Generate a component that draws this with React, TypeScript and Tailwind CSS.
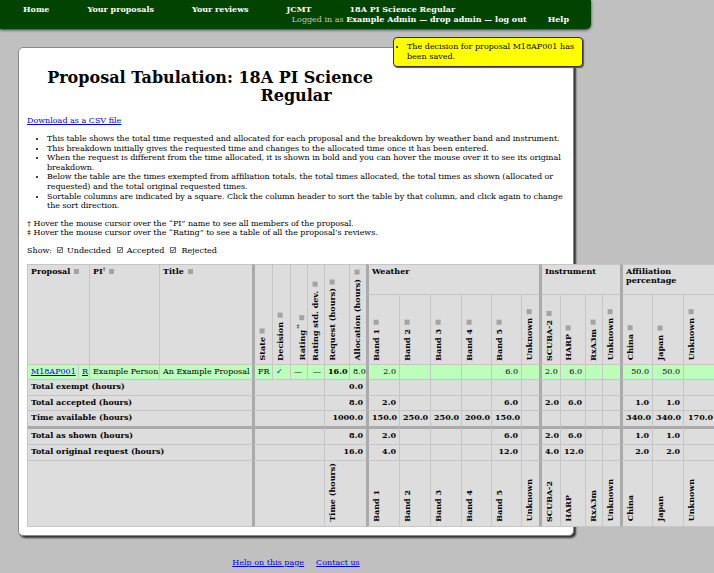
import React from "react";

/* sort indicator square */
function Sq() {
  return <span className="inline-block w-[5px] h-[5px] bg-[#a3a3a3] ms-[4px]" />;
}

function Rot({ children, sq }: { children: React.ReactNode; sq?: boolean }) {
  return (
    <div className="[writing-mode:vertical-rl] rotate-180 whitespace-nowrap font-bold">
      {children}
      {sq && <Sq />}
    </div>
  );
}

function Check() {
  return (
    <svg width="6" height="6" viewBox="0 0 6 6" className="inline-block align-[-0.5px]">
      <rect x="0.5" y="0.5" width="5" height="5" fill="#fff" stroke="#777" />
      <path d="M1.3 3.1 L2.5 4.3 L4.7 1.4" stroke="#222" strokeWidth="0.9" fill="none" />
    </svg>
  );
}

const C = "border-l border-t border-[#c6c6c6] px-[3px] py-0";
const TH = "border-l-[3px] border-l-[#aaaaaa]";
const TOP = "border-t-[3px] border-t-[#aaaaaa]";

const GROUP_START = [0, 6, 10];
const SUB_LABELS = ["Band 1", "Band 2", "Band 3", "Band 4", "Band 5", "Unknown", "SCUBA-2", "HARP", "RxA3m", "Unknown", "China", "Japan", "Unknown"];

const SUMMARY = [
  { label: "Total exempt (hours)", value: "0.0", cells: ["", "", "", "", "", "", "", "", "", "", "", "", ""] },
  { label: "Total accepted (hours)", value: "8.0", cells: ["2.0", "", "", "", "6.0", "", "2.0", "6.0", "", "", "1.0", "1.0", ""] },
  { label: "Time available (hours)", value: "1000.0", cells: ["150.0", "250.0", "250.0", "200.0", "150.0", "", "", "", "", "", "340.0", "340.0", "170.0"] },
  { label: "Total as shown (hours)", value: "8.0", cells: ["2.0", "", "", "", "6.0", "", "2.0", "6.0", "", "", "1.0", "1.0", ""], sep: true },
  { label: "Total original request (hours)", value: "16.0", cells: ["4.0", "", "", "", "12.0", "", "4.0", "12.0", "", "", "2.0", "2.0", ""] },
];
const ROW_H = ["h-[15.5px]", "h-[15.5px]", "h-[15.5px]", "h-[18.5px]", "h-[15.5px]"];

const DATA_CELLS = ["2.0", "", "", "", "6.0", "", "2.0", "6.0", "", "", "50.0", "50.0", ""];

function Tabulation() {
  return (
    <table className="border-separate border-spacing-0 table-fixed w-[689px] mt-[8px] bg-[#dddddd]">
      <colgroup>
        <col className="w-[51px]" />
        <col className="w-[11px]" />
        <col className="w-[70px]" />
        <col className="w-[93px]" />
        <col className="w-[20px]" />
        <col className="w-[18px]" />
        <col className="w-[17px]" />
        <col className="w-[17px]" />
        <col className="w-[25px]" />
        <col className="w-[17px]" />
        <col className="w-[33px]" />
        <col className="w-[31px]" />
        <col className="w-[31px]" />
        <col className="w-[30px]" />
        <col className="w-[30px]" />
        <col className="w-[18px]" />
        <col className="w-[21px]" />
        <col className="w-[25px]" />
        <col className="w-[17px]" />
        <col className="w-[18px]" />
        <col className="w-[32px]" />
        <col className="w-[31px]" />
        <col className="w-[33px]" />
      </colgroup>
      <thead>
        <tr className="h-[30px]">
          <th colSpan={2} rowSpan={2} className={`${C} align-top text-left pt-[2px]`}>
            Proposal<Sq />
          </th>
          <th rowSpan={2} className={`${C} align-top text-left pt-[2px]`}>
            PI<sup className="text-[5px] top-[-3px]">†</sup><Sq />
          </th>
          <th rowSpan={2} className={`${C} align-top text-left pt-[2px]`}>
            Title<Sq />
          </th>
          <th rowSpan={2} className={`${C} ${TH} align-bottom pb-[3px]`}><Rot sq>State</Rot></th>
          <th rowSpan={2} className={`${C} align-bottom pb-[3px]`}><Rot sq>Decision</Rot></th>
          <th rowSpan={2} className={`${C} align-bottom pb-[3px]`}>
            <Rot sq>Rating<span className="text-[5px] align-super">‡</span></Rot>
          </th>
          <th rowSpan={2} className={`${C} align-bottom pb-[3px]`}><Rot sq>Rating std. dev.</Rot></th>
          <th rowSpan={2} className={`${C} align-bottom pb-[3px]`}><Rot sq>Request (hours)</Rot></th>
          <th rowSpan={2} className={`${C} align-bottom pb-[3px]`}><Rot sq>Allocation (hours)</Rot></th>
          <th colSpan={6} className={`${C} ${TH} align-top text-left pt-[2px]`}>Weather</th>
          <th colSpan={4} className={`${C} ${TH} align-top text-left pt-[2px]`}>Instrument</th>
          <th colSpan={3} className={`${C} ${TH} align-top text-left pt-[2px]`}>Affiliation percentage</th>
        </tr>
        <tr className="h-[70px]">
          {SUB_LABELS.map((l, i) => (
            <th key={i} className={`${C} ${GROUP_START.includes(i) ? TH : ""} align-bottom pb-[3px]`}>
              <Rot sq>{l}</Rot>
            </th>
          ))}
        </tr>
      </thead>
      <tbody>
        <tr className="h-[15.5px] bg-[#bbffbb]">
          <td className={C}>
            <a className="text-[#0000ee] underline">M18AP001</a>
          </td>
          <td className={C}>
            <a className="text-[#0000ee] underline">R</a>
          </td>
          <td className={`${C} whitespace-nowrap`}>Example Person</td>
          <td className={`${C} whitespace-nowrap`}>An Example Proposal</td>
          <td className={`${C} ${TH}`}>FR</td>
          <td className={`${C} text-[#0000cc]`}>✓</td>
          <td className={C}>—</td>
          <td className={`${C} text-right`}>—</td>
          <td className={`${C} text-right font-bold`}>16.0</td>
          <td className={`${C} text-right`}>8.0</td>
          {DATA_CELLS.map((v, i) => (
            <td key={i} className={`${C} ${GROUP_START.includes(i) ? TH : ""} text-right`}>{v}</td>
          ))}
        </tr>
        {SUMMARY.map((r, ri) => (
          <tr key={r.label} className={`${ROW_H[ri]} font-bold`}>
            <td colSpan={4} className={`${C} ${r.sep ? TOP : ""} whitespace-nowrap`}>{r.label}</td>
            <td colSpan={4} className={`${C} ${TH} ${r.sep ? TOP : ""}`}></td>
            <td colSpan={2} className={`${C} ${r.sep ? TOP : ""} text-right`}>{r.value}</td>
            {r.cells.map((v, i) => (
              <td key={i} className={`${C} ${GROUP_START.includes(i) ? TH : ""} ${r.sep ? TOP : ""} text-right`}>{v}</td>
            ))}
          </tr>
        ))}
        <tr className="h-[67px]">
          <td colSpan={4} className={`${C} border-b`}></td>
          <td colSpan={4} className={`${C} ${TH} border-b`}></td>
          <td colSpan={2} className={`${C} border-b align-bottom pb-[4px]`}>
            <Rot>Time (hours)</Rot>
          </td>
          {SUB_LABELS.map((l, i) => (
            <td key={i} className={`${C} ${GROUP_START.includes(i) ? TH : ""} border-b align-bottom pb-[4px]`}>
              <Rot>{l}</Rot>
            </td>
          ))}
        </tr>
      </tbody>
    </table>
  );
}

export default function App() {
  return (
    <div className="w-full h-[573px] overflow-hidden bg-[#c0c0c0] [font-family:'DejaVu_Serif',serif] text-[8px] leading-[9.6px] text-black">
      {/* top navigation */}
      <nav className="w-[591px] h-[29px] bg-[#004400] rounded-br-[5px] shadow-[0_1px_3px_#333] pt-[4px] text-white font-bold leading-[10px]">
        <div className="flex pl-[4px]">
          {["Home", "Your proposals", "Your reviews", "JCMT", "18A PI Science Regular"].map((t) => (
            <span key={t} className="px-[19px] whitespace-nowrap">
              {t}
            </span>
          ))}
        </div>
        <div className="flex justify-end pr-[3px]">
          <span className="whitespace-nowrap">
            <span className="font-normal text-[#c8c8c8]">Logged in as </span>
            Example Admin — drop admin — log out
          </span>
          <span className="pl-[21px] pr-[19px]">Help</span>
        </div>
      </nav>

      {/* main panel */}
      <div className="ml-[18px] mt-[18px] w-[556px] bg-white border border-[#888888] rounded-[5px] shadow-[2px_2px_2px_#333] pt-[10px] px-[8px] pb-[8px]">
        <div className="float-right w-[190px] h-[30px] mt-[-21px] mr-[-18px] mb-[4px] bg-[#ffff00] border border-[#333] rounded-[4px] shadow-[1px_1px_1px_#555] pt-[4px] leading-[10px]">
          <ul className="list-disc pl-[13px] pr-[4px]">
            <li>The decision for proposal M18AP001 has been saved.</li>
          </ul>
        </div>
        <h1 className="text-center text-[16px] font-bold leading-[18.5px] mt-[10.7px] mb-[10.7px]">
          Proposal Tabulation: 18A PI Science Regular
        </h1>
        <p>
          <a className="text-[#0000ee] underline">Download as a CSV file</a>
        </p>
        <ul className="list-disc pl-[20px] mt-[8px] tracking-[-0.045px]">
          <li>This table shows the total time requested and allocated for each proposal and the breakdown by weather band and instrument.</li>
          <li>This breakdown initially gives the requested time and changes to the allocated time once it has been entered.</li>
          <li>When the request is different from the time allocated, it is shown in bold and you can hover the mouse over it to see its original breakdown.</li>
          <li>Below the table are the times exempted from affiliation totals, the total times allocated, the total times as shown (allocated or requested) and the total original requested times.</li>
          <li>Sortable columns are indicated by a square. Click the column header to sort the table by that column, and click again to change the sort direction.</li>
        </ul>
        <p className="mt-[8px] tracking-[-0.045px]">
          † Hover the mouse cursor over the “PI” name to see all members of the proposal.
          <br />‡ Hover the mouse cursor over the “Rating” to see a table of all the proposal’s reviews.
        </p>
        <p className="mt-[8px]">
          Show:
          <span className="ml-[5px]"><Check /></span>
          <span className="ml-[4px]">Undecided</span>
          <span className="ml-[6px]"><Check /></span>
          <span className="ml-[4px]">Accepted</span>
          <span className="ml-[6px]"><Check /></span>
          <span className="ml-[5px]">Rejected</span>
        </p>
        <Tabulation />
      </div>

      {/* footer */}
      <div className="ml-[18px] w-[556px] mt-[22px] text-center">
        <a className="text-[#0000ee] underline">Help on this page</a>
        <a className="text-[#0000ee] underline ml-[12px]">Contact us</a>
      </div>
    </div>
  );
}
